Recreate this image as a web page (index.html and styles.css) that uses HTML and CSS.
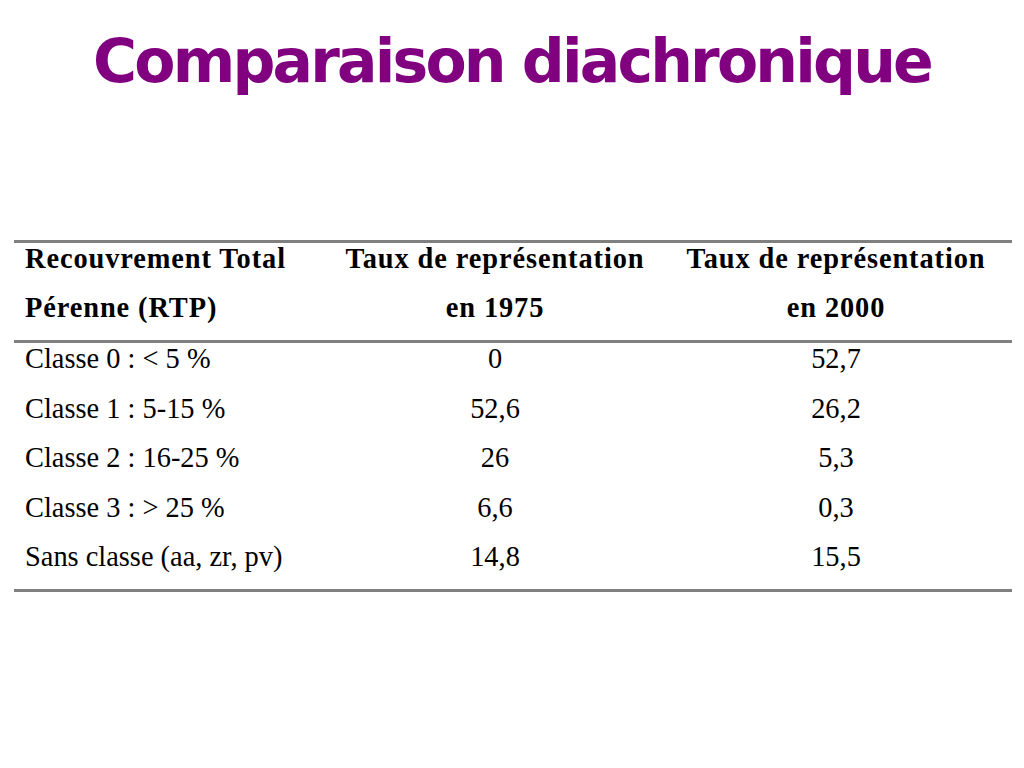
FILE: index.html
```html
<!DOCTYPE html>
<html lang="fr">
<head>
<meta charset="utf-8">
<title>Comparaison diachronique</title>
<link rel="stylesheet" href="styles.css">
</head>
<body>
<div class="slide">
  <h1 class="title">Comparaison diachronique</h1>
  <table class="data">
    <thead>
      <tr>
        <th class="c1"><span class="l">Recouvrement Total</span><span class="l">Pérenne (RTP)</span></th>
        <th class="c2"><span class="l">Taux de représentation</span><span class="l">en 1975</span></th>
        <th class="c3"><span class="l">Taux de représentation</span><span class="l">en 2000</span></th>
      </tr>
    </thead>
    <tbody>
      <tr><td class="c1">Classe 0 : &lt; 5 %</td><td class="c2">0</td><td class="c3">52,7</td></tr>
      <tr><td class="c1">Classe 1 : 5-15 %</td><td class="c2">52,6</td><td class="c3">26,2</td></tr>
      <tr><td class="c1">Classe 2 : 16-25 %</td><td class="c2">26</td><td class="c3">5,3</td></tr>
      <tr><td class="c1">Classe 3 : &gt; 25 %</td><td class="c2">6,6</td><td class="c3">0,3</td></tr>
      <tr class="last"><td class="c1">Sans classe (aa, zr, pv)</td><td class="c2">14,8</td><td class="c3">15,5</td></tr>
    </tbody>
  </table>
</div>
</body>
</html>
```
FILE: styles.css
```css
html, body {
  margin: 0;
  padding: 0;
  background: #ffffff;
}

.slide {
  width: 1024px;
  height: 768px;
  overflow: hidden;
}

.title {
  margin: 22px 0 0;
  height: 78px;
  line-height: 78px;
  text-align: center;
  white-space: nowrap;
  font-family: "DejaVu Sans", sans-serif;
  font-weight: bold;
  font-size: 60px;
  letter-spacing: -2.8px;
  color: #800080;
}

.data {
  margin: 140px 0 0 14px;
  width: 998px;
  border-collapse: collapse;
  font-family: "Liberation Serif", "Times New Roman", serif;
  font-size: 28.4px;
  color: #000000;
  table-layout: fixed;
}

.data thead tr {
  border-top: 3px solid #808080;
  border-bottom: 3px solid #808080;
}

.data tbody tr.last {
  border-bottom: 3px solid #808080;
}

.data th {
  font-weight: bold;
  letter-spacing: 0.9px;
  padding: 0 0 17px;
  vertical-align: top;
}

.data th .l {
  display: block;
  line-height: 31px;
}

.data th .l + .l {
  margin-top: 18px;
}

.data td {
  padding: 0 0 18.5px;
  line-height: 31px;
  vertical-align: top;
}

.data tr.last td {
  padding-bottom: 17px;
}

.c1 {
  width: 305px;
  text-align: left;
  padding-left: 11px !important;
}

.c2 {
  width: 330px;
  text-align: center;
}

.c3 {
  width: 352px;
  text-align: center;
}
```
